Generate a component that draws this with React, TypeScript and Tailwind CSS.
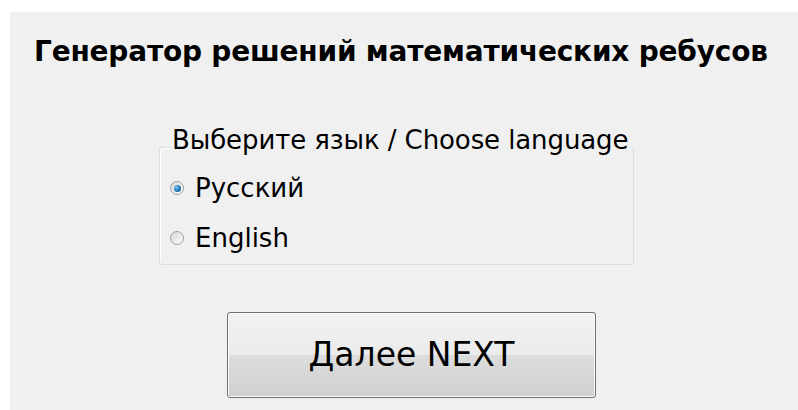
import { useState } from 'react'

const font = "font-['Comic_Sans_MS','DejaVu_Sans',sans-serif]"

type Lang = 'ru' | 'en'

function Radio({ checked, label, onClick }: { checked: boolean; label: string; onClick: () => void }) {
  return (
    <button type="button" onClick={onClick} className="flex items-center gap-[11px] h-[26px] text-[26px] text-black">
      <span className="relative flex h-[14px] w-[14px] items-center justify-center rounded-full border border-[#a0a0a0] bg-gradient-to-br from-[#d8d8d8] to-[#fdfdfd]">
        {checked && (
          <span className="h-[7px] w-[7px] rounded-full bg-[radial-gradient(circle_at_35%_35%,#7cc6f2,#1a6fb0_60%,#0b4a80)]" />
        )}
      </span>
      <span className="leading-none">{label}</span>
    </button>
  )
}

export default function App() {
  const [lang, setLang] = useState<Lang>('ru')

  return (
    <div className={`h-[410px] w-[798px] bg-white pl-[10px] pt-[12px] ${font}`}>
      <div className="flex h-full flex-col bg-[#f0f0f0]">
        {/* title */}
        <h1 className="ml-[24px] mt-[25px] text-[28px] font-bold leading-[30px] tracking-[-0.2px] text-black whitespace-nowrap">
          Генератор решений математических ребусов
        </h1>

        {/* language group */}
        <div className="relative ml-[149px] mt-[80px] h-[118px] w-[475px] rounded-[3px] border border-[#d5dfe5] shadow-[inset_1px_1px_0_#fff]">
          <span className="absolute left-[9px] top-[-23px] bg-[#f0f0f0] px-[3px] text-[26px] leading-[30px] tracking-[-0.1px] text-black whitespace-nowrap">
            Выберите язык / Choose language
          </span>
          <div className="mt-[27px] ml-[10px] flex flex-col gap-[24px]">
            <Radio checked={lang === 'ru'} label="Русский" onClick={() => setLang('ru')} />
            <Radio checked={lang === 'en'} label="English" onClick={() => setLang('en')} />
          </div>
        </div>

        {/* next button */}
        <button
          type="button"
          className="ml-[217px] mt-[47px] h-[86px] w-[369px] rounded-[3px] border border-[#707070] bg-[linear-gradient(#f2f2f2,#ebebeb_50%,#dddddd_50%,#cfcfcf)] shadow-[inset_0_0_0_1px_#fcfcfc] text-[33px] text-black"
        >
          Далее NEXT
        </button>
      </div>
    </div>
  )
}
